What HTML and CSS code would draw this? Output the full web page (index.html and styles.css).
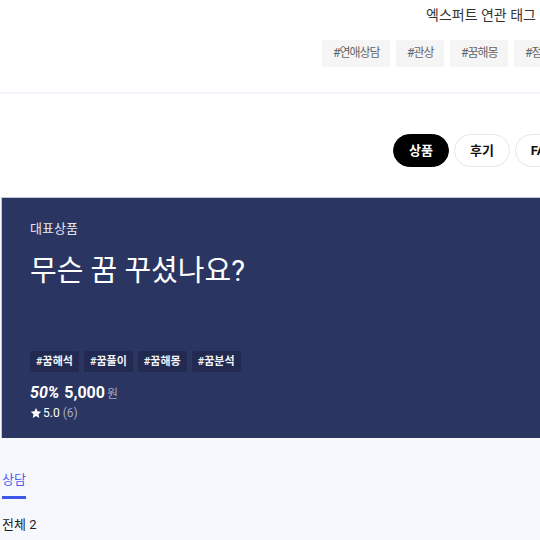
FILE: index.html
```html
<!DOCTYPE html>
<html lang="ko">
<head>
<meta charset="utf-8">
<link rel="stylesheet" href="styles.css">
</head>
<body>
<div class="page">
  <header class="related">
    <div class="related-title">엑스퍼트 연관 태그</div>
    <div class="tag-row">
      <span class="tag">#연애상담</span>
      <span class="tag">#관상</span>
      <span class="tag">#꿈해몽</span>
      <span class="tag">#점성술</span>
    </div>
  </header>
  <div class="divider"></div>
  <nav class="tabs">
    <span class="pill active">상품</span>
    <span class="pill">후기</span>
    <span class="pill">FAQ</span>
  </nav>
  <section class="banner">
    <div class="banner-label">대표상품</div>
    <h1 class="banner-title">무슨 꿈 꾸셨나요?</h1>
    <div class="banner-tags">
      <span class="btag">#꿈해석</span>
      <span class="btag">#꿈풀이</span>
      <span class="btag">#꿈해몽</span>
      <span class="btag">#꿈분석</span>
    </div>
    <div class="price">
      <span class="discount">50%</span>
      <span class="amount">5,000</span><span class="won">원</span>
    </div>
    <div class="rating">
      <svg class="star" viewBox="0 0 24 24" width="12" height="12"><path d="M12 1.8l3.1 6.9 7.4.7-5.6 5 1.7 7.4L12 17.9l-6.6 3.9 1.7-7.4-5.6-5 7.4-.7z" fill="#fff"/></svg>
      <span class="score">5.0</span><span class="count">(6)</span>
    </div>
  </section>
  <section class="consult">
    <div class="consult-tabs">
      <span class="consult-tab">상담</span>
    </div>
    <div class="total">전체 2</div>
  </section>
</div>
</body>
</html>
```
FILE: styles.css
```css
* { box-sizing: border-box; }
html, body { margin: 0; padding: 0; }
body {
  font-family: Roboto, "Noto Sans CJK KR", sans-serif;
  color: #222;
  background: #f7f8fd;
  overflow: hidden;
  width: 540px;
  height: 540px;
}
.page { width: 540px; overflow: hidden; }

.related {
  background: #fff;
  height: 92px;
  padding-top: 5px;
  display: flex;
  flex-direction: column;
}
.related-title {
  font-size: 14px;
  line-height: 20px;
  color: #333;
  align-self: flex-end;
  padding-right: 4px;
}
.tag-row {
  display: flex;
  gap: 6px;
  margin-top: 15px;
  margin-left: 322px;
  white-space: nowrap;
}
.tag {
  flex: none;
  background: #f5f5f5;
  color: #666;
  font-size: 12px;
  letter-spacing: -1px;
  height: 27px;
  line-height: 27px;
  padding: 0 10.5px 0 11px;
  border-radius: 2px;
}
.divider { height: 2px; background: #f2f4fa; }

.tabs {
  background: #fff;
  height: 103px;
  display: flex;
  gap: 5px;
  padding: 40px 0 0 393px;
  white-space: nowrap;
}
.pill {
  flex: none;
  height: 33px;
  line-height: 31px;
  padding: 0 15px;
  border-radius: 17px;
  border: 1px solid #e6e6e6;
  background: #fff;
  font-size: 13px;
  font-weight: 700;
  color: #111;
}
.pill.active { background: #000; border-color: #000; color: #fff; }

.banner {
  margin-left: 1px;
  height: 241px;
  background: #2b3562;
  border-top: 1px solid #c4c8d6;
  border-left: 1px solid #c4c8d6;
  padding: 21px 0 0 28px;
  color: #fff;
}
.banner-label {
  font-size: 13px;
  line-height: 20px;
  color: #e4e6ee;
}
.banner-title {
  margin: 14px 0 0;
  font-size: 29px;
  line-height: 36px;
  font-weight: 400;
}
.banner-tags {
  display: flex;
  gap: 5px;
  margin-top: 62px;
}
.btag {
  background: #222a52;
  font-size: 11px;
  font-weight: 700;
  height: 21px;
  line-height: 21px;
  padding: 0 6px;
  border-radius: 2px;
  color: #f2f3f7;
}
.price {
  margin-top: 11px;
  display: flex;
  align-items: baseline;
  line-height: 20px;
}
.discount { font-style: italic; font-weight: 700; font-size: 16px; margin-right: 5px; }
.amount { font-weight: 700; font-size: 16px; }
.won { font-size: 12px; color: #a6abc2; margin-left: 2px; }
.rating {
  margin-top: 1px;
  display: flex;
  align-items: center;
  font-size: 12px;
  line-height: 16px;
}
.star { margin-right: 1px; }
.count { color: #a6abc2; margin-left: 3px; }

.consult { padding: 32px 0 0 2px; }
.consult-tabs { display: flex; }
.consult-tab {
  font-size: 13px;
  line-height: 20px;
  color: #4a5cf0;
  padding-bottom: 6px;
  border-bottom: 3px solid #3d57e8;
}
.total {
  margin-top: 17px;
  font-size: 13px;
  line-height: 18px;
  color: #222;
}
```
